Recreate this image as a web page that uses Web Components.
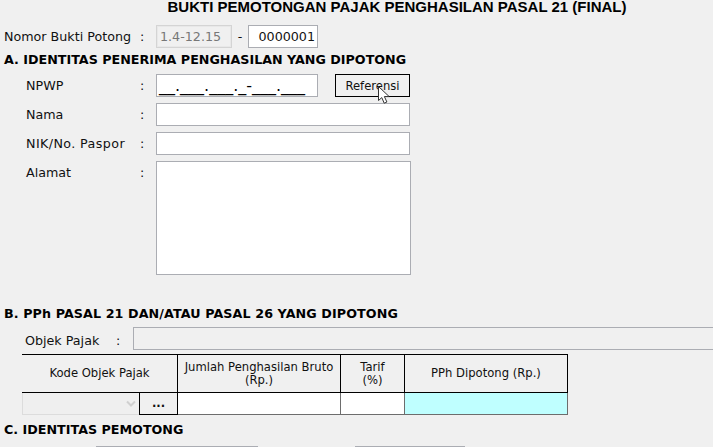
<!DOCTYPE html>
<html>
<head>
<meta charset="utf-8">
<style>
html, body { margin: 0; height: 447px; overflow: hidden; background: #f0f0f0; }
body { font: 12.7px "DejaVu Sans", sans-serif; color: #111; }
</style>
</head>
<body>
<pajak-form></pajak-form>

<script>
class SectionTitle extends HTMLElement {
	constructor() {
		super();
		this.attachShadow({ mode: 'open' });
		this.shadowRoot.innerHTML = `
		<style>
		:host { display: block; font: bold 12.7px/16px "DejaVu Sans", sans-serif; color: #000; padding-left: 4px; white-space: nowrap; }
		</style>
		<slot></slot>`;
	}
}

class TextBox extends HTMLElement {
	constructor() {
		super();
		this.attachShadow({ mode: 'open' });
		this.shadowRoot.innerHTML = `
		<style>
		:host { display: flex; align-items: center; box-sizing: border-box; height: 23px; background: #fff; border: 1px solid #abadb3; font: 12.7px "DejaVu Sans", sans-serif; color: #111; padding: 0 2px 0 3px; white-space: nowrap; overflow: hidden; }
		:host([disabled]) { background: #f0f0f0; color: #777; border-color: #d4d4d4; outline: 1px solid #e8e8e8; outline-offset: -2px; }
		:host([right]) { justify-content: flex-end; }
		</style>
		<slot></slot>`;
	}
}

class FormRow extends HTMLElement {
	constructor() {
		super();
		this.attachShadow({ mode: 'open' });
		this.shadowRoot.innerHTML = `
		<style>
		:host { display: grid; grid-template-columns: 114px 16px 1fr; padding-left: 26px; line-height: 23px; white-space: nowrap; }
		:host([flush]) { grid-template-columns: 136px 16px 1fr; padding-left: 4px; }
		</style>
		<span><slot name="label"></slot></span>
		<span>:</span>
		<div><slot></slot></div>`;
	}
}

class RefButton extends HTMLElement {
	constructor() {
		super();
		this.attachShadow({ mode: 'open' });
		this.shadowRoot.innerHTML = `
		<style>
		:host { display: flex; align-items: center; justify-content: center; position: relative; box-sizing: border-box; width: 75px; height: 23px; background: #f0f0f0; border: 1px solid #000; font: 11.6px "DejaVu Sans", sans-serif; color: #111; }
		svg { position: absolute; left: 41px; top: 10px; }
		</style>
		<slot></slot>
		<svg width="15" height="20" viewBox="0 0 15 20">
			<path d="M1.5 1.5V15.5L4.8 12.6L7.2 18.2L9.9 17L7.4 11.6H12.2Z" fill="#fff" stroke="#333" stroke-width="1"/>
		</svg>`;
	}
}

class PphTable extends HTMLElement {
	constructor() {
		super();
		this.attachShadow({ mode: 'open' });
		this.shadowRoot.innerHTML = `
		<style>
		:host { display: grid; grid-template-columns: 156px 163px 64px 163px; grid-template-rows: 39px 22px; width: 546px; box-sizing: border-box; margin-left: 22px; font: 11.6px/13px "DejaVu Sans", sans-serif; color: #111; text-align: center; }
		.head { display: flex; align-items: center; justify-content: center; box-sizing: border-box; border: solid #000; border-width: 1px 1px 1px 0; }
		.head:first-child { border-left-width: 1px; }
		.cell { box-sizing: border-box; background: #fff; border: solid #6d6d6d; border-width: 0 1px 1px 0; }
		.kode { display: grid; grid-template-columns: 117px 39px; }
		.select { display: flex; align-items: center; justify-content: flex-end; box-sizing: border-box; background: #efefef; border: solid #dcdcdc; border-width: 0 0 1px 1px; padding-right: 3px; }
		.dots { box-sizing: border-box; background: #f0f0f0; border: solid #000; border-width: 0 1px 1px 1px; font-weight: bold; line-height: 20px; }
		.pph { background: #bfffff; }
		</style>
		<div class="head">Kode Objek Pajak</div>
		<div class="head">Jumlah Penghasilan Bruto<br>(Rp.)</div>
		<div class="head">Tarif<br>(%)</div>
		<div class="head">PPh Dipotong (Rp.)</div>
		<div class="kode">
			<div class="select">
				<svg width="10" height="7" viewBox="0 0 10 7"><path d="M1 1.5L5 5.5L9 1.5" fill="none" stroke="#d0d0d0" stroke-width="2"/></svg>
			</div>
			<div class="dots">...</div>
		</div>
		<div class="cell"></div>
		<div class="cell"></div>
		<div class="cell pph"></div>`;
	}
}

class PajakForm extends HTMLElement {
	constructor() {
		super();
		this.attachShadow({ mode: 'open' });
		this.shadowRoot.innerHTML = `
		<style>
		:host { display: block; width: 713px; height: 447px; overflow: hidden; }
		h1 { margin: 0; height: 14px; font: bold 15px/14px "Liberation Sans", sans-serif; color: #000; text-align: center; padding-left: 81px; white-space: nowrap; }
		.nomor { margin-top: 11px; }
		.nomor-inputs { display: flex; align-items: center; }
		.dash { width: 16px; text-align: center; }
		.a { margin-top: 4px; }
		.rows { display: flex; flex-direction: column; margin-top: 6px; gap: 6px; padding-right: 303px; }
		.npwp { display: flex; gap: 17px; }
		.mask { font-size: 16px; line-height: 18px; margin-left: -1px; color: #000; }
		.nik { letter-spacing: .4px; }
		.alamat { height: 114px; width: 255px; }
		.b { margin-top: 31px; letter-spacing: .1px; }
		.objek { display: flex; align-items: flex-start; height: 23px; margin-top: 5px; padding-left: 25px; line-height: 27px; white-space: nowrap; }
		.objek span:first-child { width: 91px; }
		.objek span + span { width: 17px; }
		.objek text-box { flex: 1; margin-right: -1px; background: #f0f0f0; }
		pph-table { margin-top: 4px; }
		.c { margin-top: 7px; }
		.bottom { display: flex; margin-top: 8px; padding-left: 96px; gap: 97px; }
		</style>
		<h1>BUKTI PEMOTONGAN PAJAK PENGHASILAN PASAL 21 (FINAL)</h1>
		<form-row flush class="nomor">
			<span slot="label">Nomor Bukti Potong</span>
			<div class="nomor-inputs">
				<text-box disabled style="width:76px">1.4-12.15</text-box>
				<span class="dash">-</span>
				<text-box right style="width:70px">0000001</text-box>
			</div>
		</form-row>
		<section-title class="a">A. IDENTITAS PENERIMA PENGHASILAN YANG DIPOTONG</section-title>
		<div class="rows">
			<form-row>
				<span slot="label">NPWP</span>
				<div class="npwp">
					<text-box style="width:162px"><span class="mask">__.___.___._-___.___</span></text-box>
					<ref-button>Referensi</ref-button>
				</div>
			</form-row>
			<form-row><span slot="label">Nama</span><text-box></text-box></form-row>
			<form-row><span slot="label" class="nik">NIK/No. Paspor</span><text-box></text-box></form-row>
			<form-row><span slot="label">Alamat</span><text-box class="alamat"></text-box></form-row>
		</div>
		<section-title class="b">B. PPh PASAL 21 DAN/ATAU PASAL 26 YANG DIPOTONG</section-title>
		<div class="objek">
			<span>Objek Pajak</span><span>:</span>
			<text-box></text-box>
		</div>
		<pph-table></pph-table>
		<section-title class="c">C. IDENTITAS PEMOTONG</section-title>
		<div class="bottom">
			<text-box style="width:162px"></text-box>
			<text-box style="width:110px"></text-box>
		</div>`;
	}
}

customElements.define('section-title', SectionTitle);
customElements.define('text-box', TextBox);
customElements.define('form-row', FormRow);
customElements.define('ref-button', RefButton);
customElements.define('pph-table', PphTable);
customElements.define('pajak-form', PajakForm);
</script>
</body>
</html>
